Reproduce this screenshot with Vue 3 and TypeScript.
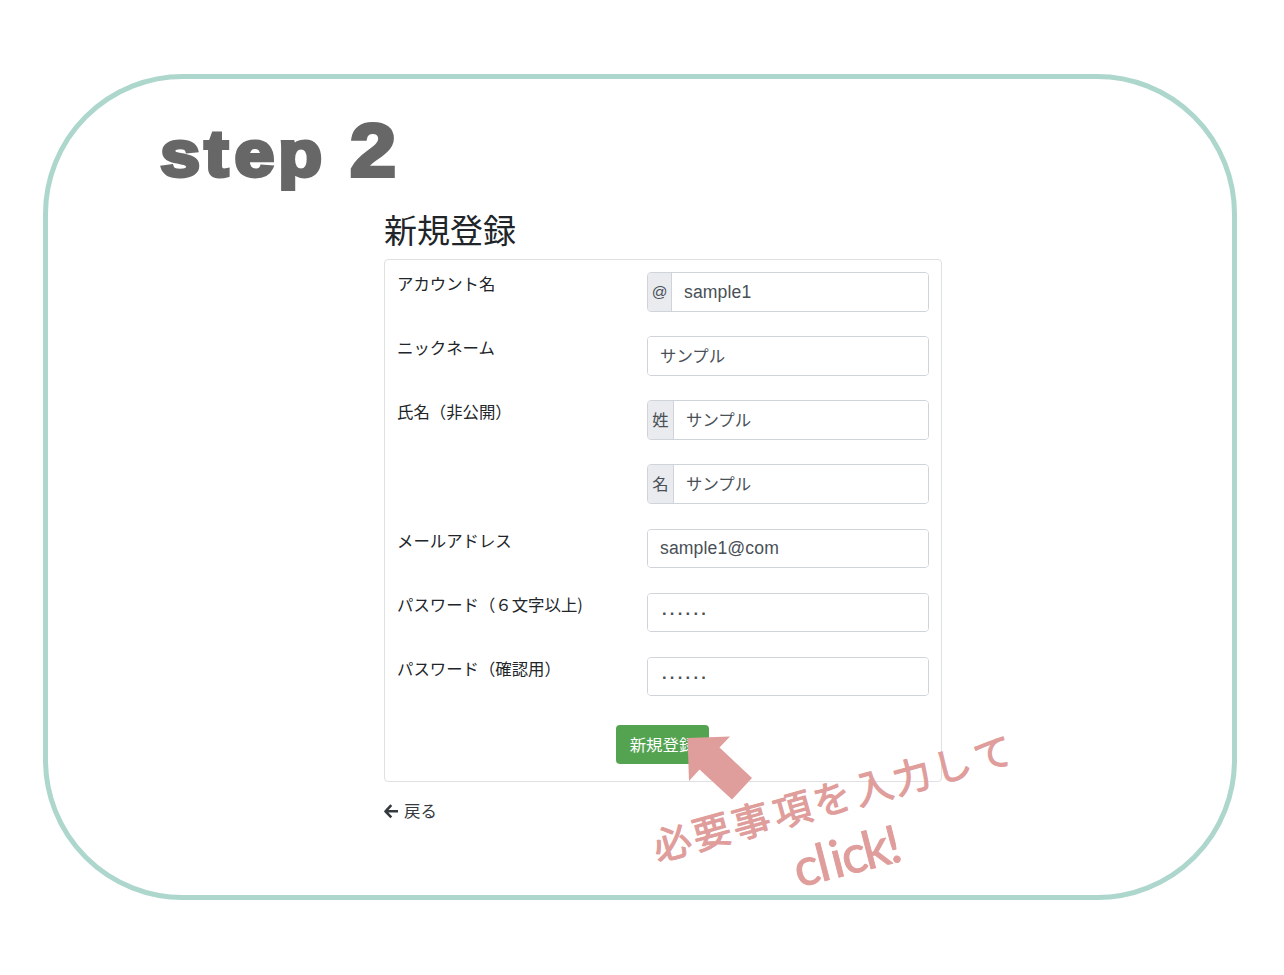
<script setup lang="ts">
interface Field {
  label: string
  value: string
  prefix?: string
  kind: 'latin' | 'kana' | 'dots'
}

const fields: Field[] = [
  { label: 'アカウント名', value: 'sample1', prefix: '@', kind: 'latin' },
  { label: 'ニックネーム', value: 'サンプル', kind: 'kana' },
  { label: '氏名（非公開）', value: 'サンプル', prefix: '姓', kind: 'kana' },
  { label: '', value: 'サンプル', prefix: '名', kind: 'kana' },
  { label: 'メールアドレス', value: 'sample1@com', kind: 'latin' },
  { label: 'パスワード（６文字以上)', value: '······', kind: 'dots' },
  { label: 'パスワード（確認用）', value: '······', kind: 'dots' },
]
</script>

<template>
  <main class="slide">
    <section class="frame">
      <svg class="heading" width="280" height="110" viewBox="150 90 280 110" role="img">
        <g class="heading-text">
          <g transform="scale(1.12 1)">
            <text y="176" font-size="64" text-anchor="middle"><tspan x="160.9">s</tspan><tspan x="193.3">t</tspan><tspan x="227.2">e</tspan><tspan x="268">p</tspan></text>
          </g>
          <text x="350" y="175.5" font-size="75" textLength="46" lengthAdjust="spacingAndGlyphs">2</text>
        </g>
      </svg>

      <div class="signup">
        <h1>新規登録</h1>
        <form class="card" @submit.prevent>
          <div v-for="(f, i) in fields" :key="i" class="row">
            <label>{{ f.label }}</label>
            <div class="group">
              <span v-if="f.prefix" class="prefix" :class="{ at: f.prefix === '@' }">{{ f.prefix }}</span>
              <input type="text" :class="f.kind" :value="f.value" />
            </div>
          </div>
          <button type="submit">新規登録</button>
        </form>
        <a class="back">
          <svg width="15" height="15" viewBox="0 0 15 15">
            <path d="M7.3 1.2 L1.5 7.3 L7.3 13.4 M1.8 7.3 H14" fill="none" stroke="#343a40" stroke-width="2.6" stroke-linejoin="round" />
          </svg>
          <span>戻る</span>
        </a>
      </div>
    </section>

    <svg class="note" width="430" height="200" viewBox="600 700 430 200">
      <path d="M687.5 738 L730 736.5 L719.5 747.5 L752 778 L732 799.5 L699.5 769.5 L689 781 Z" fill="#df9d9b" />
      <g class="hand">
        <g transform="translate(672 843) rotate(-15.5)">
          <text class="kanji" x="0" y="14" text-anchor="middle">
            <tspan x="0">必</tspan><tspan x="41">要</tspan><tspan x="82">事</tspan><tspan x="125">項</tspan><tspan x="166">を</tspan><tspan x="209">入</tspan><tspan x="249">力</tspan><tspan x="291">し</tspan><tspan x="333">て</tspan>
          </text>
        </g>
        <g transform="translate(801 887) rotate(-14.5)">
          <text class="click" x="0" y="0" text-anchor="middle"><tspan x="10">c</tspan><tspan x="27">l</tspan><tspan x="41.5">i</tspan><tspan x="59">c</tspan><tspan x="82">k</tspan><tspan x="100">!</tspan></text>
        </g>
      </g>
    </svg>
  </main>
</template>

<style>
body {
  margin: 0;
  background: #fff;
}
</style>

<style scoped>
.slide {
  position: relative;
  box-sizing: border-box;
  width: 1284px;
  height: 975px;
  padding: 74px 47px 75px 43px;
  background: #fff;
  overflow: hidden;
  font-family: "Noto Sans CJK JP", sans-serif;
  color: #212529;
}
.frame {
  box-sizing: border-box;
  height: 826px;
  border: 5.6px solid #add6cc;
  border-radius: 140px;
  padding: 11px 0 0 102px;
}
.heading {
  display: block;
}
.heading-text {
  font-family: "Liberation Sans", Arial, sans-serif;
  font-weight: 700;
  fill: #676767;
  stroke: #676767;
  stroke-width: 3.8;
}
.signup {
  width: 558px;
  margin: 8px 0 0 234px;
}
h1 {
  margin: 0;
  font-size: 33px;
  font-weight: 400;
  line-height: 42px;
  height: 51px;
  box-sizing: border-box;
}
.card {
  box-sizing: border-box;
  height: 523px;
  border: 1px solid #dfe0e2;
  border-radius: 4px;
  padding: 12px 12px 0;
}
.row {
  display: flex;
  height: 64.15px;
}
label {
  width: 250px;
  flex: none;
  font-size: 16.4px;
  line-height: 23px;
  white-space: nowrap;
}
.group {
  display: flex;
  flex: 1;
  box-sizing: border-box;
  height: 39.5px;
  border: 1px solid #ced4da;
  border-radius: 4px;
  overflow: hidden;
}
.prefix {
  flex: none;
  width: 25px;
  background: #e9ebef;
  border-right: 1px solid #ced4da;
  color: #495057;
  font-size: 16.4px;
  line-height: 37px;
  text-align: center;
}
.prefix.at {
  width: 23px;
  font-family: "Liberation Sans", sans-serif;
  font-size: 15.5px;
}
input {
  flex: 1;
  min-width: 0;
  border: 0;
  outline: 0;
  padding: 0 12px 2px;
  background: #fff;
  color: #495057;
  font-family: "Noto Sans CJK JP", sans-serif;
  font-size: 16.4px;
}
.latin {
  padding: 1px 12px 0;
  font-family: "Liberation Sans", sans-serif;
  font-size: 17.6px;
  letter-spacing: 0.12px;
}
.dots {
  padding: 2px 12px 0 14px;
  font-family: "Liberation Sans", sans-serif;
  font-weight: 700;
  letter-spacing: 2.4px;
}
button {
  display: block;
  width: 93px;
  height: 39px;
  margin: 4px 0 0 219px;
  padding: 0;
  border: 0;
  border-radius: 4px;
  background: #54a351;
  color: #fff;
  font-family: "Noto Sans CJK JP", sans-serif;
  font-size: 16.4px;
}
.back {
  display: flex;
  align-items: center;
  gap: 5px;
  height: 25px;
  margin-top: 17px;
  font-size: 16.4px;
  color: #343a40;
}
.back span {
  margin-top: -4px;
}
.note {
  position: absolute;
  left: 600px;
  top: 700px;
}
.hand {
  fill: #df9d9b;
  stroke: #df9d9b;
  stroke-linejoin: round;
  stroke-linecap: round;
}
.kanji {
  font-family: "Noto Sans CJK JP", sans-serif;
  font-size: 38px;
  stroke-width: 1.1;
}
.click {
  font-family: Lato, sans-serif;
  font-size: 52px;
  stroke-width: 1;
}
</style>
